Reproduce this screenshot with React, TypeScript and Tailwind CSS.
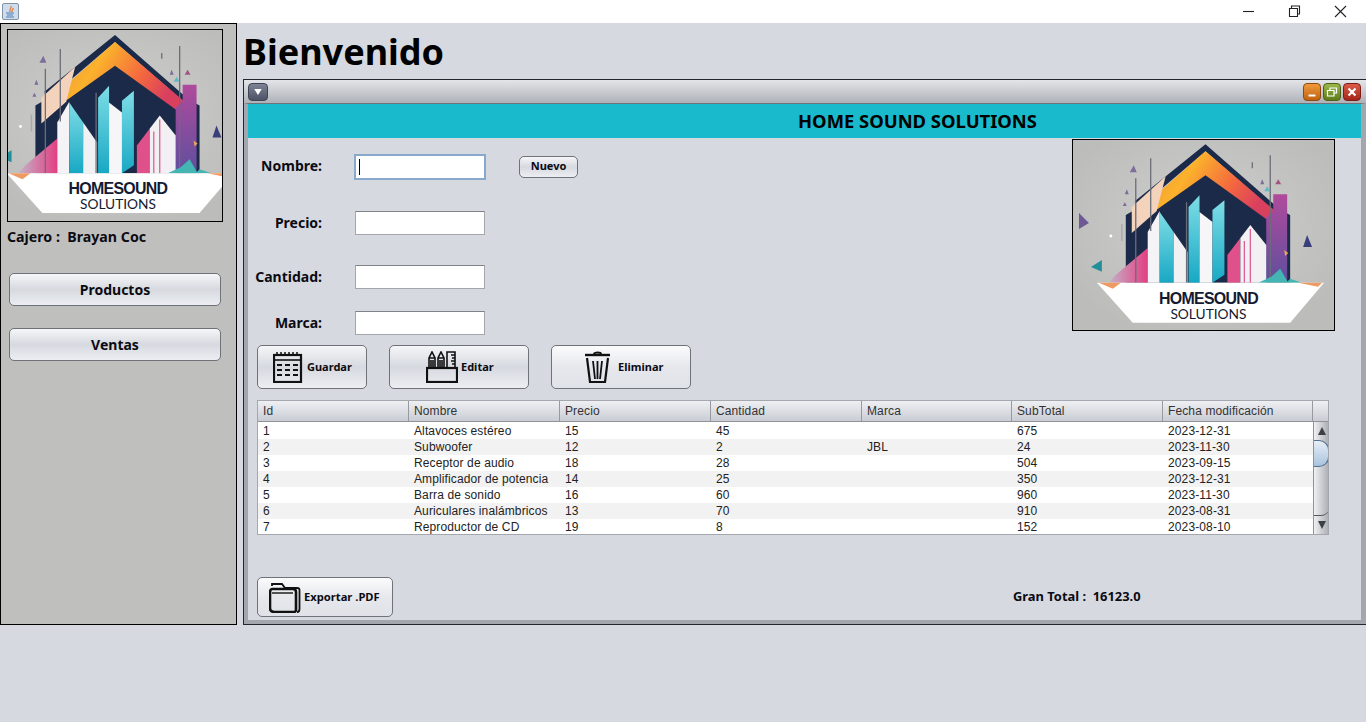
import type { ReactNode } from "react";

const bold = "font-['Noto_Sans',sans-serif] font-bold text-[#0b0b12]";
const btn =
  "flex items-center border border-[#6f7278] bg-linear-to-b from-[#f5f6f8] via-[#d6d9df] to-[#eceef2]";
const btnLight =
  "flex items-center border border-[#6f7278] bg-linear-to-b from-[#fbfbfc] via-[#e6e8ec] to-[#dfe2e8]";

const rows = [
  ["1", "Altavoces estéreo", "15", "45", "", "675", "2023-12-31"],
  ["2", "Subwoofer", "12", "2", "JBL", "24", "2023-11-30"],
  ["3", "Receptor de audio", "18", "28", "", "504", "2023-09-15"],
  ["4", "Amplificador de potencia", "14", "25", "", "350", "2023-12-31"],
  ["5", "Barra de sonido", "16", "60", "", "960", "2023-11-30"],
  ["6", "Auriculares inalámbricos", "13", "70", "", "910", "2023-08-31"],
  ["7", "Reproductor de CD", "19", "8", "", "152", "2023-08-10"],
];
const headers = ["Id", "Nombre", "Precio", "Cantidad", "Marca", "SubTotal", "Fecha modificación"];
const cols = "grid grid-cols-[151px_151px_151px_151px_150px_151px_150px]";

function Logo({ viewBox, className }: { viewBox: string; className: string }) {
  return (
    <svg viewBox={viewBox} className={className} preserveAspectRatio="xMidYMid slice">
      <defs>
        <linearGradient id="roof" x1="0" y1="0" x2="1" y2="0.35">
          <stop offset="0" stopColor="#e98a3a" />
          <stop offset="0.42" stopColor="#fbb22c" />
          <stop offset="0.75" stopColor="#f4683f" />
          <stop offset="1" stopColor="#d9405e" />
        </linearGradient>
        <linearGradient id="pinkg" x1="0" y1="0" x2="1" y2="0">
          <stop offset="0" stopColor="#c3b2c8" />
          <stop offset="1" stopColor="#e33f82" />
        </linearGradient>
        <linearGradient id="cyan" x1="0" y1="0" x2="0" y2="1">
          <stop offset="0" stopColor="#7fdde6" />
          <stop offset="1" stopColor="#18a8c4" />
        </linearGradient>
        <linearGradient id="purple" x1="0" y1="0" x2="0" y2="1">
          <stop offset="0" stopColor="#b04a9c" />
          <stop offset="1" stopColor="#5f4f9e" />
        </linearGradient>
        <radialGradient id="bgglow" cx="0.5" cy="0.45" r="0.6">
          <stop offset="0" stopColor="#cfcfcf" />
          <stop offset="1" stopColor="#bcbcba" />
        </radialGradient>
      </defs>
      <rect x="0" y="0" width="262" height="192" fill="url(#bgglow)" />
      <path d="M133 5L205 68L201 71L133 12L65 70L62 62Z" fill="#1b2a48" />
      <path d="M53 76L133 30L218 76V144H53Z" fill="#1b2a48" />
      <path d="M133 12L203 72L201 85L133 36L85 70L65 72Z" fill="url(#roof)" />
      <path d="M59 68L93 37L84 72L59 94Z" fill="#f4d3bd" />
      <path d="M201 55H215V144H194V78L201 72Z" fill="url(#purple)" />
      <path d="M43 136L75 109V144H36Z" fill="url(#pinkg)" />
      <path d="M75 93L87 72V144H75Z" fill="#f4f4f6" />
      <path d="M87 73L101 93V144H87Z" fill="url(#cyan)" />
      <path d="M101 93L115 113V144H101Z" fill="#f1f1f4" />
      <path d="M116 68L127 56V144H116Z" fill="url(#cyan)" />
      <path d="M127 73L140 83V144H127Z" fill="#f6f6f8" />
      <path d="M140 71L152 61V136L140 144Z" fill="url(#cyan)" />
      <path d="M155 116L168 99V144H155Z" fill="#e0518c" />
      <path d="M168 99L178 86L194 106V144H168Z" fill="#f3f0f4" />
      <path d="M172 102V144M178 90V144" stroke="#d9568f" strokeWidth="1.2" />
      {/* thin masts */}
      <path d="M78 19V92M198 16V144M63 39V144M114 63V144M180 23V29" stroke="#6b6d78" strokeWidth="1.3" />
      <path d="M49 85V102" stroke="#a9a9ae" strokeWidth="1.5" />
      {/* scattered triangles */}
      <path d="M6 74L16 84L6 90Z" fill="#6d5a94" />
      <path d="M18 128L29 121V133Z" fill="#238f9a" />
      <path d="M235 96L240 108H231Z" fill="#3a3f7c" />
      <path d="M61 26L64 33L57 33ZM54 50L56 55L52 55ZM52 63L54 67L50 67ZM190 40L192 45L188 45Z" fill="#7c6d9a" />
      <path d="M206 40L209 45L203 45Z" fill="#a0557f" />
      <path d="M195 47L198 52L192 52Z" fill="#62b8c4" />
      <path d="M199 138L208 130L216 144H186ZM218 140L230 144H214Z" fill="#43b6b4" />
      <circle cx="38" cy="97" r="1.5" fill="#fff" />
      <path d="M24 144H252L218 184H60Z" fill="#fff" />
      <path d="M26 144H48L40 150ZM226 144H250L246 148Z" fill="#ee9a62" />
      <path d="M212 111L216 114L213 117Z" fill="#e6a65c" />
      <text textAnchor="middle" fill="#141a32">
        <tspan x="136" y="165" fontFamily="'Liberation Sans',sans-serif" fontSize="16" fontWeight="700" letterSpacing="-0.7">HOMESOUND</tspan>
        <tspan x="136" y="180" fontFamily="'Lato',sans-serif" fontSize="13.8">SOLUTIONS</tspan>
      </text>
    </svg>
  );
}

function CalendarIcon() {
  return (
    <svg viewBox="0 0 30 32" className="h-[32px] w-[30px]" fill="none" stroke="#111" strokeWidth="2.2">
      <rect x="1" y="4" width="27" height="27" />
      <path d="M1 9H28" strokeWidth="1.6" />
      <path d="M4 1V5M8 1V5M12 1V5M16 1V5M20 1V5M24 1V5" strokeWidth="1.5" />
      <path d="M4 14H9M12 14H17M20 14H25M4 19H9M12 19H17M20 19H25M4 24H9M12 24H17M20 24H25" strokeWidth="2.2" />
    </svg>
  );
}

function CupIcon() {
  return (
    <svg viewBox="0 0 32 32" className="h-[32px] w-[32px]" fill="none" stroke="#111" strokeWidth="2.2">
      <rect x="1" y="17" width="30" height="14" />
      <path d="M3 16V7L6 1L9 7V16M3 7H9M5 9V16M7 9V16" strokeWidth="1.6" />
      <path d="M12 16V7L15 1L18 7V16M12 7H18M14 9V16M16 9V16" strokeWidth="1.6" />
      <path d="M21 16V1H29V16M25 4H29M26 7H29M25 10H29M26 13H29" strokeWidth="1.6" />
    </svg>
  );
}

function TrashIcon() {
  return (
    <svg viewBox="0 0 26 32" className="h-[32px] w-[26px]" fill="none" stroke="#111" strokeWidth="2.2">
      <path d="M0 4H25" strokeWidth="2.4" />
      <path d="M9 3C9 1 16 1 16 3" strokeWidth="1.8" />
      <path d="M2 7L5 31H20L23 7" />
      <path d="M8 10L10 28M12.5 10V28M17 10L15 28" strokeWidth="1.8" />
    </svg>
  );
}

function FolderIcon() {
  return (
    <svg viewBox="0 0 32 32" className="h-[32px] w-[32px]" fill="none" stroke="#111" strokeWidth="1.8">
      <path d="M3 5V3H13L16 7H28C29.5 7 30.5 8 30.5 9V28C30.5 30 29.5 31 28 31" strokeWidth="1.8" />
      <path d="M3 8H24C26 8 27 9 27 11V29C27 30 26 31 25 31H6C3 31 1 30 1 27V12C1 10 1.5 8 3 8Z" strokeWidth="2.6" />
      <path d="M3 12H24" strokeWidth="1.4" />
    </svg>
  );
}

function ActionButton({ look, width, gap, pl, icon, label }: { look: string; width: string; gap: string; pl: string; icon: ReactNode; label: string }) {
  return (
    <button className={`${look} ${width} ${gap} ${pl} h-[44px] rounded-[5px]`}>
      {icon}
      <span className={`${bold} text-[11px]`}>{label}</span>
    </button>
  );
}

function FormRow({ label, mt, children }: { label: string; mt: string; children: ReactNode }) {
  return (
    <div className={`${mt} flex h-[24px] items-center`}>
      <span className={`${bold} w-[74px] pb-[2px] text-right text-[14px]`}>{label}</span>
      {children}
    </div>
  );
}

const field = "ml-[33px] h-[24px] w-[130px] border border-[#a4a6ab] border-t-[#808389] bg-white";

function FrameControl({ className, children }: { className: string; children: ReactNode }) {
  return (
    <div className={`${className} flex h-[18px] w-[18px] items-center justify-center rounded-[4px] border`}>
      <svg viewBox="0 0 12 12" className="h-[12px] w-[12px]" fill="none" stroke="#fff" strokeWidth="1.5">
        {children}
      </svg>
    </div>
  );
}

export default function App() {
  return (
    <div className="flex h-[722px] w-[1366px] flex-col overflow-hidden bg-[#d6d9e0]">
      {/* window title bar */}
      <div className="flex h-[23px] items-center bg-white pr-[19px] pl-[2px]">
        <svg viewBox="0 0 17 17" className="h-[17px] w-[17px]">
          <rect x="0.5" y="0.5" width="16" height="16" rx="1.5" fill="#cfdcec" stroke="#8293a8" />
          <path d="M9 3C10 5 7 6 8 9M11 5C12 7 9 7 10 9" stroke="#e0762a" strokeWidth="1.2" fill="none" />
          <path d="M4 10H12M5 12H11M4 14H12" stroke="#4f7fb4" strokeWidth="1.1" />
        </svg>
        <div className="ml-auto flex items-center gap-[33px]">
          <svg viewBox="0 0 13 13" className="h-[13px] w-[13px]" fill="none" stroke="#222" strokeWidth="1.1"><path d="M1 6.5H12" /></svg>
          <svg viewBox="0 0 13 13" className="h-[13px] w-[13px]" fill="none" stroke="#222" strokeWidth="1.1"><path d="M3.5 3V1H11.5V9H9.5M1.5 3.5H9.5V11.5H1.5Z" /></svg>
          <svg viewBox="0 0 13 13" className="h-[13px] w-[13px]" fill="none" stroke="#222" strokeWidth="1.1"><path d="M1 1L12 12M12 1L1 12" /></svg>
        </div>
      </div>

      <div className="flex h-[602px]">
        {/* sidebar */}
        <aside className="flex w-[237px] shrink-0 flex-col border border-black bg-[#bfbfbd] pt-[5px] pl-[6px]">
          <div className="h-[193px] w-[216px] border border-black">
            <Logo viewBox="25 0 216 192" className="h-full w-full" />
          </div>
          <p className={`${bold} mt-[5px] text-[14.2px] leading-[20px]`}>Cajero :&nbsp;&nbsp;Brayan Coc</p>
          <button className={`${btn} ${bold} mt-[26px] ml-[2px] h-[33px] w-[212px] justify-center rounded-[5px] text-[14px]`}>Productos</button>
          <button className={`${btn} ${bold} mt-[22px] ml-[2px] h-[33px] w-[212px] justify-center rounded-[5px] text-[14px]`}>Ventas</button>
        </aside>

        <main className="ml-[6px] flex min-w-0 flex-1 flex-col">
          <h1 className={`${bold} flex h-[56px] items-center pt-[2px] text-[36px] !text-black`}>Bienvenido</h1>

          {/* internal frame */}
          <section className="flex h-[546px] flex-col border border-r-0 border-[#23262c] bg-[#d6d9e0]">
            <div className="flex h-[23px] shrink-0 items-center bg-linear-to-b from-[#e3e5e9] to-[#aeb1b7] pr-[5px] pl-[4px]">
              <div className="flex h-[18px] w-[20px] items-center justify-center rounded-[4px] border border-[#3f4454] bg-linear-to-b from-[#7e8496] to-[#4d5266]">
                <svg viewBox="0 0 10 8" className="h-[6px] w-[8px]"><path d="M0 0H10L5 8Z" fill="#fff" /></svg>
              </div>
              <div className="ml-auto flex gap-[2px]">
                <FrameControl className="border-[#8c4a10] bg-linear-to-b from-[#f09a3c] to-[#c0620f]"><path d="M2.5 9.5H9.5" strokeWidth="2" /></FrameControl>
                <FrameControl className="border-[#4d6114] bg-linear-to-b from-[#9ab84a] to-[#5f7d16]"><path d="M4 4V2H10.5V7H8M1.5 4.5H8V10H1.5Z" strokeWidth="1.2" /></FrameControl>
                <FrameControl className="border-[#7c1c14] bg-linear-to-b from-[#dc5a48] to-[#a52518]"><path d="M2.5 2.5L9.5 9.5M9.5 2.5L2.5 9.5" strokeWidth="2.2" /></FrameControl>
              </div>
            </div>

            <div className="flex min-h-0 flex-1 flex-col border-x-[4px] border-r-[5px] border-b-[4px] border-t border-[#a3a6ac] border-t-[#6f7278]">
              <div className={`${bold} flex h-[34px] shrink-0 items-center justify-center bg-[#18bacb] pl-[226px] text-[18.4px] !text-black`}>HOME SOUND SOLUTIONS</div>

              <div className="flex shrink-0">
                <div className="flex-1">
                  <div className="mt-[16px] flex h-[25px] items-center">
                    <span className={`${bold} w-[74px] pb-[2px] text-right text-[14px]`}>Nombre:</span>
                    <div className="ml-[32px] flex h-[26px] w-[132px] items-center border-2 border-[#88a8cc] bg-white pl-[3px]">
                      <div className="h-[16px] w-px bg-black" />
                    </div>
                    <button className={`${btn} ${bold} ml-[33px] h-[22px] w-[59px] justify-center rounded-[5px] text-[11px]`}>Nuevo</button>
                  </div>
                  <FormRow label="Precio:" mt="mt-[32px]"><div className={field} /></FormRow>
                  <FormRow label="Cantidad:" mt="mt-[30px]"><div className={field} /></FormRow>
                  <FormRow label="Marca:" mt="mt-[22px]"><div className={field} /></FormRow>
                  <div className="mt-[10px] ml-[9px] flex gap-[22px]">
                    <ActionButton look={btn} width="w-[110px]" gap="gap-[4px]" pl="pl-[15px]" icon={<CalendarIcon />} label="Guardar" />
                    <ActionButton look={btn} width="w-[140px]" gap="gap-[3px]" pl="pl-[36px]" icon={<CupIcon />} label="Editar" />
                    <ActionButton look={btnLight} width="w-[140px]" gap="gap-[7px]" pl="pl-[33px]" icon={<TrashIcon />} label="Eliminar" />
                  </div>
                </div>
                <div className="mt-[1px] mr-[26px] h-[192px] w-[263px] border border-black">
                  <Logo viewBox="0 0 262 192" className="h-full w-full" />
                </div>
              </div>

              {/* table */}
              <div className="mt-[11px] ml-[9px] flex h-[135px] w-[1072px] shrink-0 flex-col overflow-hidden border border-[#a4a7ad] bg-white font-['Liberation_Sans',sans-serif] text-[12px] tracking-[0.12px] text-[#222]">
                <div className="flex h-[21px] shrink-0 border-b border-[#8f9298] bg-linear-to-b from-[#eef0f3] to-[#c9ccd3]">
                  <div className={cols}>
                    {headers.map((h) => (
                      <div key={h} className="flex items-center border-r border-[#9699a0] pl-[5px] text-[#333]">{h}</div>
                    ))}
                  </div>
                  <div className="flex-1" />
                </div>
                <div className="flex min-h-0 flex-1">
                  <div className="flex-1 pt-[1px]">
                    {rows.map((r, i) => (
                      <div key={r[0]} className={`${cols} h-[16px] items-center leading-[16px] ${i % 2 ? "bg-[#f2f2f2]" : "bg-white"}`}>
                        {r.map((c, j) => (
                          <div key={j} className="whitespace-nowrap pl-[5px]">{c}</div>
                        ))}
                      </div>
                    ))}
                  </div>
                  <div className="flex w-[16px] shrink-0 flex-col border-l border-[#8f9298] bg-linear-to-r from-[#f0f1f3] to-[#a9acb2]">
                    <div className="flex h-[18px] shrink-0 items-center justify-center">
                      <svg viewBox="0 0 8 8" className="h-[8px] w-[8px]"><path d="M4 0L8 8H0Z" fill="#3c3f46" /></svg>
                    </div>
                    <div className="h-[27px] shrink-0 rounded-r-[10px] border border-l-0 border-[#56708f] bg-linear-to-b from-[#e6eef6] to-[#a9c3de]" />
                    <div className="min-h-0 flex-1 rounded-br-[8px] border-b border-[#55585e]" />
                    <div className="flex h-[18px] shrink-0 items-center justify-center">
                      <svg viewBox="0 0 8 8" className="h-[8px] w-[8px]"><path d="M4 8L8 0H0Z" fill="#3c3f46" /></svg>
                    </div>
                  </div>
                </div>
              </div>

              <div className="mt-[42px] ml-[9px] flex items-center">
                <button className={`${btnLight} h-[40px] w-[136px] gap-[3px] rounded-[5px] pl-[11px]`}>
                  <FolderIcon />
                  <span className={`${bold} text-[11.2px]`}>Exportar .PDF</span>
                </button>
                <span className={`${bold} ml-[620px] text-[12.9px]`}>Gran Total :&nbsp;&nbsp;16123.0</span>
              </div>
            </div>
          </section>
        </main>
      </div>
    </div>
  );
}
